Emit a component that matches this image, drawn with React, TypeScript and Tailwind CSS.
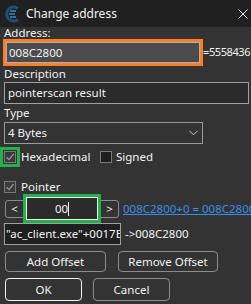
import React from "react";

const font = { fontFamily: '"Noto Sans", "Open Sans", Arial, sans-serif' };

function Check({ checked, dark }: { checked?: boolean; dark?: boolean }) {
  return (
    <div
      className={`w-[12px] h-[12px] border border-[#7a7a7a] flex items-center justify-center shrink-0 ${
        dark ? "bg-[#1e1e1e]" : "bg-[#3a3a3a]"
      }`}
    >
      {checked && (
        <svg width="10" height="10" viewBox="0 0 10 10">
          <path d="M1.5 5.2 L4 7.6 L8.6 2" fill="none" stroke="#9a9a9a" strokeWidth="1.2" />
        </svg>
      )}
    </div>
  );
}

function Btn({ label, w, focus }: { label: string; w: string; focus?: boolean }) {
  return (
    <div
      className={`${w} h-full rounded-[4px] border flex items-center justify-center text-[#f2f2f2] ${
        focus ? "border-[#f0f0f0]" : "border-[#8c8c8c]"
      }`}
    >
      {label}
    </div>
  );
}

export default function App() {
  return (
    <div className="w-[251px] h-[304px] bg-[#333333] overflow-hidden text-[#f2f2f2] text-[11.5px]" style={font}>
      {/* title bar */}
      <div className="h-[27px] bg-[#202020] flex items-center">
        <svg className="ml-[5px]" width="16" height="18" viewBox="0 0 16 18">
          <path d="M13 3.5 A7 7 0 1 0 13 14.5" fill="none" stroke="#1d4f7a" strokeWidth="3" />
          <path d="M5 6 H11 M4 9 H10 M5 12 H11" stroke="#3a8ac4" strokeWidth="1.5" />
        </svg>
        <span className="ml-[5px] text-[12px] leading-none">Change address</span>
        <svg className="ml-auto mr-[3px]" width="10" height="10" viewBox="0 0 10 10">
          <path d="M0.5 0.5 L9.5 9.5 M9.5 0.5 L0.5 9.5" stroke="#e8e8e8" strokeWidth="1" />
        </svg>
      </div>

      <div className="px-[4px]">
        <div className="h-[12px] flex items-center leading-none">Address:</div>

        <div className="h-[27px] flex items-center -ml-[1px]">
          <div className="w-[200px] h-[27px] border-[3px] border-[#ff7f27] shrink-0">
            <div className="h-full border border-[#b0b0b0] bg-[#4b4b4b] flex items-center pl-[2px]">
              008C2800
            </div>
          </div>
          <span className="whitespace-nowrap text-[11px] tracking-[-0.4px]">=5558436</span>
        </div>

        <div className="h-[16px] flex items-center leading-none">Description</div>
        <div className="h-[22px] w-[245px] border border-[#a0a0a0] bg-[#2a2a2a] flex items-center pl-[3px]">
          pointerscan result
        </div>

        <div className="h-[18px] flex items-center leading-none">Type</div>
        <div className="h-[22px] w-[199px] border border-[#9a9a9a] flex items-center pl-[3px] pr-[4px]">
          <span>4 Bytes</span>
          <svg className="ml-auto" width="9" height="6" viewBox="0 0 9 6">
            <path d="M0.5 0.8 L4.5 4.8 L8.5 0.8" fill="none" stroke="#c8c8c8" strokeWidth="1" />
          </svg>
        </div>

        <div className="h-[20px] mt-[3px] flex items-center -ml-[4px]">
          <div className="w-[20px] h-[20px] border-[3px] border-[#22b14c] flex items-center justify-center shrink-0">
            <Check checked />
          </div>
          <span className="ml-[1px] w-[79px]">Hexadecimal</span>
          <Check dark />
          <span className="ml-[4px]">Signed</span>
        </div>

        <div className="h-[27px] flex items-end pb-[1px]">
          <Check checked />
          <span className="ml-[5px] leading-none pb-[1px]">Pointer</span>
        </div>

        <div className="h-[29px] flex items-center">
          <div className="ml-[1px] w-[114px] h-[18px] border border-[#8c8c8c] rounded-[3px] flex items-center shrink-0">
            <span className="w-[17px] text-center leading-none">&lt;</span>
            <div className="w-[78px] h-[29px] border-[3px] border-[#22b14c] shrink-0">
              <div className="h-full border border-[#f0f0f0] bg-[#2b2b2b] flex items-center justify-center">
                00<span className="w-[1px] h-[14px] bg-[#f0f0f0]" />
              </div>
            </div>
            <span className="w-[17px] text-center leading-none">&gt;</span>
          </div>
          <span className="ml-[4px] text-[#3b8eea] underline whitespace-nowrap">
            008C2800+0 = 008C2800
          </span>
        </div>

        <div className="h-[22px] flex items-center">
          <div className="w-[117px] h-full border border-[#a0a0a0] bg-[#1f1f1f] overflow-hidden whitespace-nowrap flex items-center pl-[1px] shrink-0">
            "ac_client.exe"+0017B
          </div>
          <span className="ml-[4px]">-&gt;008C2800</span>
        </div>

        <div className="h-[21px] mt-[6px] flex pl-[1px] gap-[12px]">
          <Btn label="Add Offset" w="w-[101px]" />
          <Btn label="Remove Offset" w="w-[100px]" />
        </div>

        <div className="h-[23px] mt-[6px] flex pl-[1px] gap-[11px]">
          <Btn label="OK" w="w-[77px]" focus />
          <Btn label="Cancel" w="w-[77px]" />
        </div>
      </div>
    </div>
  );
}
